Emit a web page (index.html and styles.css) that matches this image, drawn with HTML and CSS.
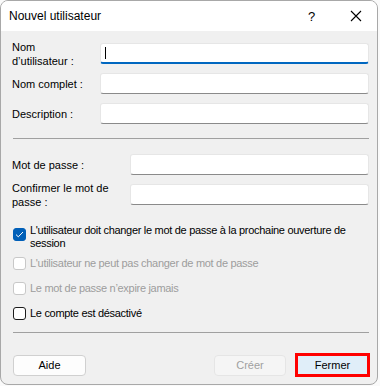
FILE: index.html
```html
<!DOCTYPE html>
<html lang="fr">
<head>
  <meta charset="UTF-8">
  <title>Nouvel utilisateur</title>
  <link rel="stylesheet" href="styles.css">
</head>
<body>

  <!-- Dialog window -->
  <div class="window">

    <!-- Title bar -->
    <div class="titlebar">
      <span class="title">Nouvel utilisateur</span>
      <span class="help">?</span>
      <span class="close">
        <svg width="12" height="12" viewBox="0 0 12 12">
          <path d="M1 1 L11 11 M11 1 L1 11" stroke="#000" stroke-width="1.1" fill="none"/>
        </svg>
      </span>
    </div>

    <div class="content">

      <!-- Account fields -->
      <div class="field">
        <label class="label">Nom<br>d’utilisateur :</label>
        <div class="input focused"><span class="caret"></span></div>
      </div>
      <div class="field">
        <label class="label">Nom complet :</label>
        <div class="input"></div>
      </div>
      <div class="field last">
        <label class="label">Description :</label>
        <div class="input"></div>
      </div>

      <div class="sep"></div>

      <!-- Password fields -->
      <div class="field wide">
        <label class="label">Mot de passe :</label>
        <div class="input"></div>
      </div>
      <div class="field wide last">
        <label class="label">Confirmer le mot de<br>passe :</label>
        <div class="input"></div>
      </div>

      <!-- Options -->
      <div class="check first">
        <span class="box checked">
          <svg width="9" height="7" viewBox="0 0 9 7"><path d="M1 3.6 L3.3 5.8 L8 1" stroke="#fff" stroke-width="1" fill="none"/></svg>
        </span>
        <span class="text">L'utilisateur doit changer le mot de passe à la prochaine ouverture de<br>session</span>
      </div>
      <div class="check disabled">
        <span class="box"></span>
        <span class="text">L'utilisateur ne peut pas changer de mot de passe</span>
      </div>
      <div class="check disabled">
        <span class="box"></span>
        <span class="text">Le mot de passe n’expire jamais</span>
      </div>
      <div class="check">
        <span class="box"></span>
        <span class="text">Le compte est désactivé</span>
      </div>

      <div class="sep bottom"></div>

      <!-- Buttons -->
      <div class="footer">
        <button class="btn">Aide</button>
        <span class="spacer"></span>
        <button class="btn off">Créer</button>
        <button class="btn main">Fermer</button>
      </div>

    </div>
  </div>

</body>
</html>
```

FILE: styles.css
```css
body {
  margin: 0;
  background: #fafafa;
  font-family: "Liberation Sans", Arial, sans-serif;
  font-size: 11px;
  color: #000;
}

/* Window */
.window {
  width: 376px;
  height: 383px;
  border: 1px solid #a8a8a8;
  border-radius: 8px;
  background: #f0f0f0;
  overflow: hidden;
}

.titlebar {
  height: 30px;
  background: #fff;
  display: flex;
  align-items: center;
}

.title {
  font-size: 12px;
  padding-left: 8px;
  flex: 1;
}

.help {
  font-size: 13px;
  width: 20px;
  margin-right: 22px;
}

.close {
  width: 14px;
  margin-right: 13px;
  display: flex;
}

/* Form */
.content {
  display: flex;
  flex-direction: column;
  padding: 12px 8px 0 11px;
}

.field {
  display: flex;
  align-items: center;
  height: 21px;
  flex-shrink: 0;
  margin-bottom: 9px;
}

.field.last {
  margin-bottom: 0;
}

.label {
  width: 88px;
  flex-shrink: 0;
  line-height: 14px;
}

.field.wide .label {
  width: 118px;
}

.input {
  flex: 1;
  background: #fff;
  border: 1px solid #e6e6e6;
  border-bottom-color: #8a8a8a;
  border-radius: 3px;
  box-sizing: border-box;
  height: 21px;
  position: relative;
}

.input.focused {
  border-bottom: 2px solid #0067c0;
}

.caret {
  position: absolute;
  left: 4px;
  top: 3px;
  width: 1px;
  height: 12px;
  background: #000;
}

.sep {
  height: 1px;
  flex-shrink: 0;
  background: #a0a0a0;
  margin: 14px 0 15px 1px;
}

/* Checkboxes */
.check {
  display: flex;
  align-items: flex-start;
  margin-bottom: 12px;
}

.check.first {
  margin-top: 19px;
  margin-bottom: 7px;
}

.box {
  width: 11px;
  height: 11px;
  border: 1px solid #1b1b1b;
  border-radius: 3px;
  background: #fff;
  margin: 0 4px 0 1px;
  display: flex;
  align-items: center;
  justify-content: center;
  flex-shrink: 0;
}

.box.checked {
  background: #005fb8;
  border-color: #005fb8;
  margin-top: 4px;
}

.text {
  line-height: 13px;
  letter-spacing: -0.3px;
  white-space: nowrap;
}

.check.disabled .box {
  border-color: #c8c8c8;
}

.check.disabled .text {
  color: #9d9d9d;
}

.sep.bottom {
  margin: 0 0 20px 1px;
}

/* Buttons */
.footer {
  display: flex;
  align-items: center;
  height: 24px;
}

.spacer {
  flex: 1;
}

.btn {
  font-family: inherit;
  font-size: 11px;
  height: 21px;
  width: 73px;
  background: #fdfdfd;
  border: 1px solid #d0d0d0;
  border-radius: 4px;
  color: #000;
  padding: 0;
  margin-left: 1px;
}

.btn.off {
  background: #f5f5f5;
  border-color: #e5e5e5;
  color: #a0a0a0;
  width: 72px;
  margin-right: 8px;
}

.btn.main {
  width: 75px;
  height: 24px;
  background: #e0eef9;
  border: 3px solid #ff0000;
  border-radius: 0;
  margin-right: -1px;
}
```
